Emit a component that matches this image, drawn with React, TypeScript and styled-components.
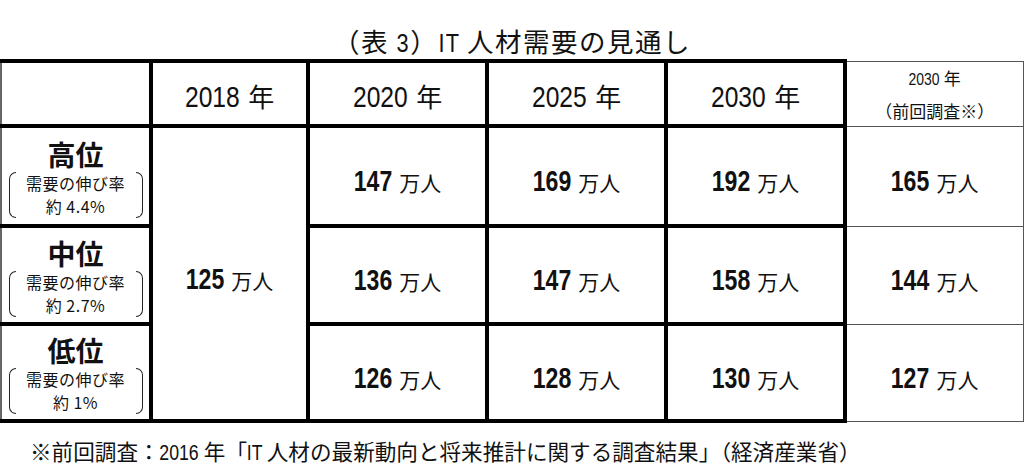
import styled, { createGlobalStyle } from "styled-components";

const GlobalStyle = createGlobalStyle`
  html, body {
    margin: 0;
    padding: 0;
    background: #fff;
  }
  body {
    font-family: "Noto Sans CJK JP", sans-serif;
    color: #111;
  }
`;

const Page = styled.div`
  width: 1024px;
  height: 471px;
  overflow: hidden;
  display: flex;
  flex-direction: column;
`;

/* condensed latin digits: Liberation Sans squeezed horizontally */
const Narrow = styled.span<{ $chars: number; $scale?: number }>`
  display: inline-block;
  font-family: "Liberation Sans", sans-serif;
  transform: scaleX(${(p) => p.$scale ?? 0.82});
  transform-origin: center;
  margin: 0 ${(p) => -0.278 * (1 - (p.$scale ?? 0.82)) * p.$chars}em;
`;

const Title = styled.h1`
  margin: 0;
  padding-top: 25px;
  height: 34px;
  line-height: 32px;
  text-align: center;
  font-size: 26.5px;
  font-weight: normal;
  letter-spacing: 1.5px;
`;

const Table = styled.table`
  width: 1022px;
  table-layout: fixed;
  border-collapse: collapse;
`;

const Cell = styled.td<{ $thin?: boolean; $h?: number }>`
  border: 4px solid #000;
  ${(p) =>
    p.$thin &&
    `
    border-top: 1px solid #555;
    border-right: 1px solid #555;
    border-bottom: 1px solid #555;
  `}
  height: ${(p) => (p.$h ? `${p.$h}px` : "auto")};
  padding: 0;
  text-align: center;
  vertical-align: middle;
`;

const FirstCell = styled(Cell)`
  border-left: 2px solid #666;
`;

const Year = styled.span`
  font-size: 30px;
`;

const YearUnit = styled.span`
  font-size: 26px;
  margin-left: 9px;
`;

const SmallHead = styled.div`
  font-size: 17px;
  line-height: 31px;
`;

const Value = styled.div`
  padding-top: 10px;
  white-space: nowrap;
  line-height: 34px;
`;

const Num = styled.span`
  font-size: 30px;
  font-weight: bold;
`;

const Unit = styled.span`
  font-size: 21px;
  margin-left: 7px;
`;

const Label = styled.div`
  display: flex;
  flex-direction: column;
  align-items: center;
  padding-top: 2px;
`;

const LabelMain = styled.div`
  font-size: 28px;
  font-weight: bold;
  line-height: 34px;
`;

const Bracket = styled.div`
  position: relative;
  width: 134px;
  height: 46px;
  display: flex;
  flex-direction: column;
  align-items: center;
  justify-content: center;
  margin-top: 1px;
  &::before,
  &::after {
    content: "";
    position: absolute;
    top: 0;
    bottom: 0;
    width: 6px;
    border: 1.5px solid #222;
  }
  &::before {
    left: 0;
    border-right: none;
    border-radius: 7px 0 0 7px;
  }
  &::after {
    right: 0;
    border-left: none;
    border-radius: 0 7px 7px 0;
  }
`;

const SubLine = styled.div`
  font-size: 16px;
  line-height: 23px;
  letter-spacing: 0.5px;
`;

const Footnote = styled.p`
  margin: 0;
  padding: 15px 0 0 30px;
  font-size: 21.6px;
  line-height: 26px;
`;

type Row = {
  label: string;
  rate: string;
  values: number[];
  prev: number;
  h: number;
};

const rows: Row[] = [
  { label: "高位", rate: "約 4.4%", values: [147, 169, 192], prev: 165, h: 96 },
  { label: "中位", rate: "約 2.7%", values: [136, 147, 158], prev: 144, h: 94 },
  { label: "低位", rate: "約 1%", values: [126, 128, 130], prev: 127, h: 93 },
];

const Amount = ({ n }: { n: number }) => (
  <Value>
    <Num>
      <Narrow $chars={String(n).length} $scale={0.77}>
        {n}
      </Narrow>
    </Num>
    <Unit>万人</Unit>
  </Value>
);

export default function App() {
  return (
    <Page>
      <GlobalStyle />
      <Title>
        （表 <Narrow $chars={1}>3</Narrow>）<Narrow $chars={2}>IT</Narrow> 人材需要の見通し
      </Title>
      <Table>
        <colgroup>
          <col style={{ width: 150 }} />
          <col style={{ width: 157 }} />
          <col style={{ width: 179 }} />
          <col style={{ width: 179 }} />
          <col style={{ width: 179 }} />
          <col style={{ width: 178 }} />
        </colgroup>
        <tbody>
          <tr>
            <FirstCell $h={60} />
            {[2018, 2020, 2025, 2030].map((y) => (
              <Cell key={y}>
                <Year>
                  <Narrow $chars={4}>{y}</Narrow>
                </Year>
                <YearUnit>年</YearUnit>
              </Cell>
            ))}
            <Cell $thin>
              <SmallHead>
                <Narrow $chars={4}>2030</Narrow> 年
                <br />
                （前回調査※）
              </SmallHead>
            </Cell>
          </tr>
          {rows.map((r, i) => (
            <tr key={r.label}>
              <FirstCell $h={r.h}>
                <Label>
                  <LabelMain>{r.label}</LabelMain>
                  <Bracket>
                    <SubLine>需要の伸び率</SubLine>
                    <SubLine>{r.rate}</SubLine>
                  </Bracket>
                </Label>
              </FirstCell>
              {i === 0 && (
                <Cell rowSpan={3}>
                  <Amount n={125} />
                </Cell>
              )}
              {r.values.map((v, j) => (
                <Cell key={j}>
                  <Amount n={v} />
                </Cell>
              ))}
              <Cell $thin>
                <Amount n={r.prev} />
              </Cell>
            </tr>
          ))}
        </tbody>
      </Table>
      <Footnote>
        ※前回調査：<Narrow $chars={4}>2016</Narrow> 年「<Narrow $chars={2}>IT</Narrow>{" "}
        人材の最新動向と将来推計に関する調査結果」（経済産業省）
      </Footnote>
    </Page>
  );
}
